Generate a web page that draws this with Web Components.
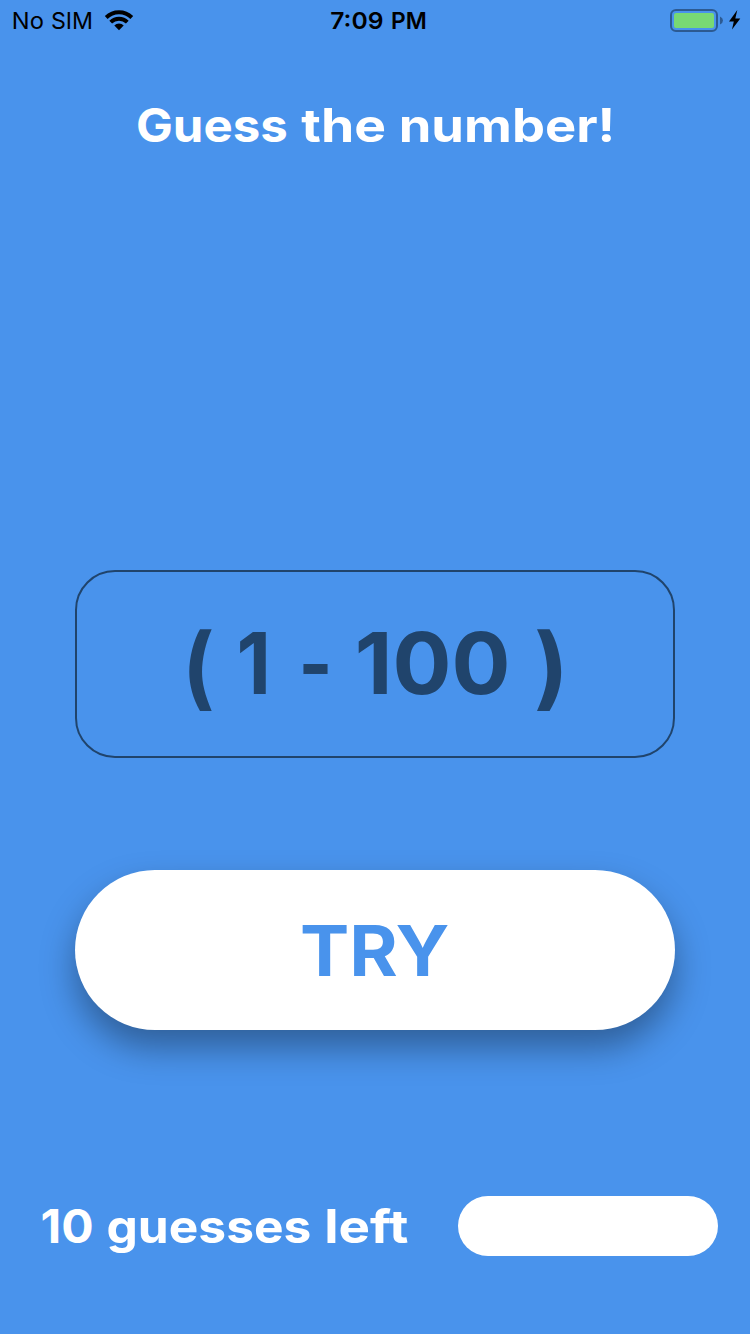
<!DOCTYPE html>
<html lang="en">
<head>
<meta charset="utf-8">
<title>Guess the number!</title>
<style>
  html, body { margin: 0; height: 100%; background: #4993ec; }
  body { font-family: Inter, "Liberation Sans", sans-serif; overflow: hidden; }
</style>
</head>
<body>
<guess-app></guess-app>
<script>
const ctx = document.createElement('canvas').getContext('2d');

// One line of display type; "words" lists "word,inkStart,inkEnd[,size,baseline]" separated by "|".
class DisplayLine extends HTMLElement {
  connectedCallback() {
    const size = +this.getAttribute('size');
    const w = +this.getAttribute('width');
    const h = +this.getAttribute('height');
    const base = +this.getAttribute('baseline');
    const weight = this.getAttribute('weight') || 700;
    // Measured at a large size, so that the ink bounds keep sub-pixel precision.
    ctx.font = `${weight} 1000px Inter`;
    const spans = this.getAttribute('words').split('|').map(part => {
      const [word, a, b, fs = size, y = base] = part.split(',');
      const m = ctx.measureText(word);
      const ratio = (b - a) / (m.actualBoundingBoxRight + m.actualBoundingBoxLeft);
      const x = +a + m.actualBoundingBoxLeft * ratio;
      return `<tspan x="${x.toFixed(2)}" y="${y}" font-size="${fs}" textLength="${(m.width * ratio).toFixed(2)}" lengthAdjust="spacingAndGlyphs">${word}</tspan>`;
    }).join(' ');
    this.attachShadow({ mode: 'open' }).innerHTML = `
      <style>:host{display:block;flex:none} svg{display:block;overflow:visible}
      text{font:${weight} ${size}px Inter,"Liberation Sans",sans-serif;fill:currentColor}</style>
      <svg width="${w}" height="${h}"><text y="${base}">${spans}</text></svg>`;
  }
}
customElements.define('display-line', DisplayLine);

class StatusBar extends HTMLElement {
  constructor() {
    super();
    this.attachShadow({ mode: 'open' }).innerHTML = `
      <style>
        :host{display:grid;grid-template-columns:104px 226px 340px 1fr;height:40px;color:#000;flex:none}
        svg{display:block}
      </style>
      <display-line width="104" height="40" baseline="29" size="23" weight="400" words="No,13.7,43|SIM,52,91.3"></display-line>
      <svg width="30" height="40" viewBox="0 0 30 40">
        <g fill="none" stroke="#000" stroke-width="3.9">
          <path d="M2.2 17.5a18.2 18.2 0 0 1 25.6 0"/>
          <path d="M6.7 22.2a11.8 11.8 0 0 1 16.6 0"/>
        </g>
        <path d="M15 30.2l-4.7-4.8a6.7 6.7 0 0 1 9.4 0z"/>
      </svg>
      <display-line width="110" height="40" baseline="29" size="23" weight="600" words="7:09,1,52.3|PM,62.4,95.3"></display-line>
      <svg width="80" height="40" viewBox="0 0 80 40">
        <rect x="1" y="10" width="46" height="21" rx="5" fill="none" stroke="#2c5a92" stroke-width="2"/>
        <rect x="4" y="13" width="40" height="15" rx="2" fill="#78d974"/>
        <path d="M50 16.5q3 1.5 3 4t-3 4z" fill="#2c5a92"/>
        <path d="M67.3 10L59 21.6h4.8L62 29.6 70.3 18.4h-5z"/>
      </svg>`;
  }
}
customElements.define('status-bar', StatusBar);

class NumberField extends HTMLElement {
  constructor() {
    super();
    this.attachShadow({ mode: 'open' }).innerHTML = `
      <style>:host{display:block;box-sizing:border-box;width:600px;height:188px;border:2px solid #20446c;border-radius:40px;color:#20446c;flex:none}</style>
      <slot></slot>`;
  }
}
customElements.define('number-field', NumberField);

class TryButton extends HTMLElement {
  constructor() {
    super();
    this.attachShadow({ mode: 'open' }).innerHTML = `
      <style>:host{display:block;width:600px;height:160px;border-radius:80px;background:#fff;color:#4993ec;box-shadow:0 18px 34px rgba(0,0,0,.35);flex:none}</style>
      <slot></slot>`;
  }
}
customElements.define('try-button', TryButton);

class GuessMeter extends HTMLElement {
  constructor() {
    super();
    this.attachShadow({ mode: 'open' }).innerHTML = `
      <style>:host{display:block;width:260px;height:60px;border-radius:30px;background:#fff}</style>`;
  }
}
customElements.define('guess-meter', GuessMeter);

class GuessApp extends HTMLElement {
  constructor() {
    super();
    this.attachShadow({ mode: 'open' }).innerHTML = `
      <style>
        :host{display:flex;flex-direction:column;align-items:center;width:750px;height:1334px;background:#4993ec;color:#fff}
        status-bar{width:750px}
        .title{margin-top:50px}
        number-field{margin-top:410px}
        try-button{margin-top:112px}
        footer{display:flex;width:750px;margin-top:166px}
      </style>
      <status-bar></status-bar>
      <display-line class="title" width="750" height="70" baseline="52" size="46.5" words="Guess,137.5,286.3|the,301.3,384.3|number!,402,611.5"></display-line>
      <number-field><display-line width="596" height="184" baseline="122" size="85" words="(,112,136,90,127|1,162,189.5|-,226,251|100,280.5,430.5|),460,484.5,90,127"></display-line></number-field>
      <try-button><display-line width="600" height="160" baseline="106" size="69.5" words="TRY,227.3,373.7"></display-line></try-button>
      <footer>
        <display-line width="458" height="60" baseline="47" size="46.5" words="10,42,92|guesses,108,310|left,327.5,408"></display-line>
        <guess-meter></guess-meter>
      </footer>`;
  }
}
customElements.define('guess-app', GuessApp);
</script>
</body>
</html>
